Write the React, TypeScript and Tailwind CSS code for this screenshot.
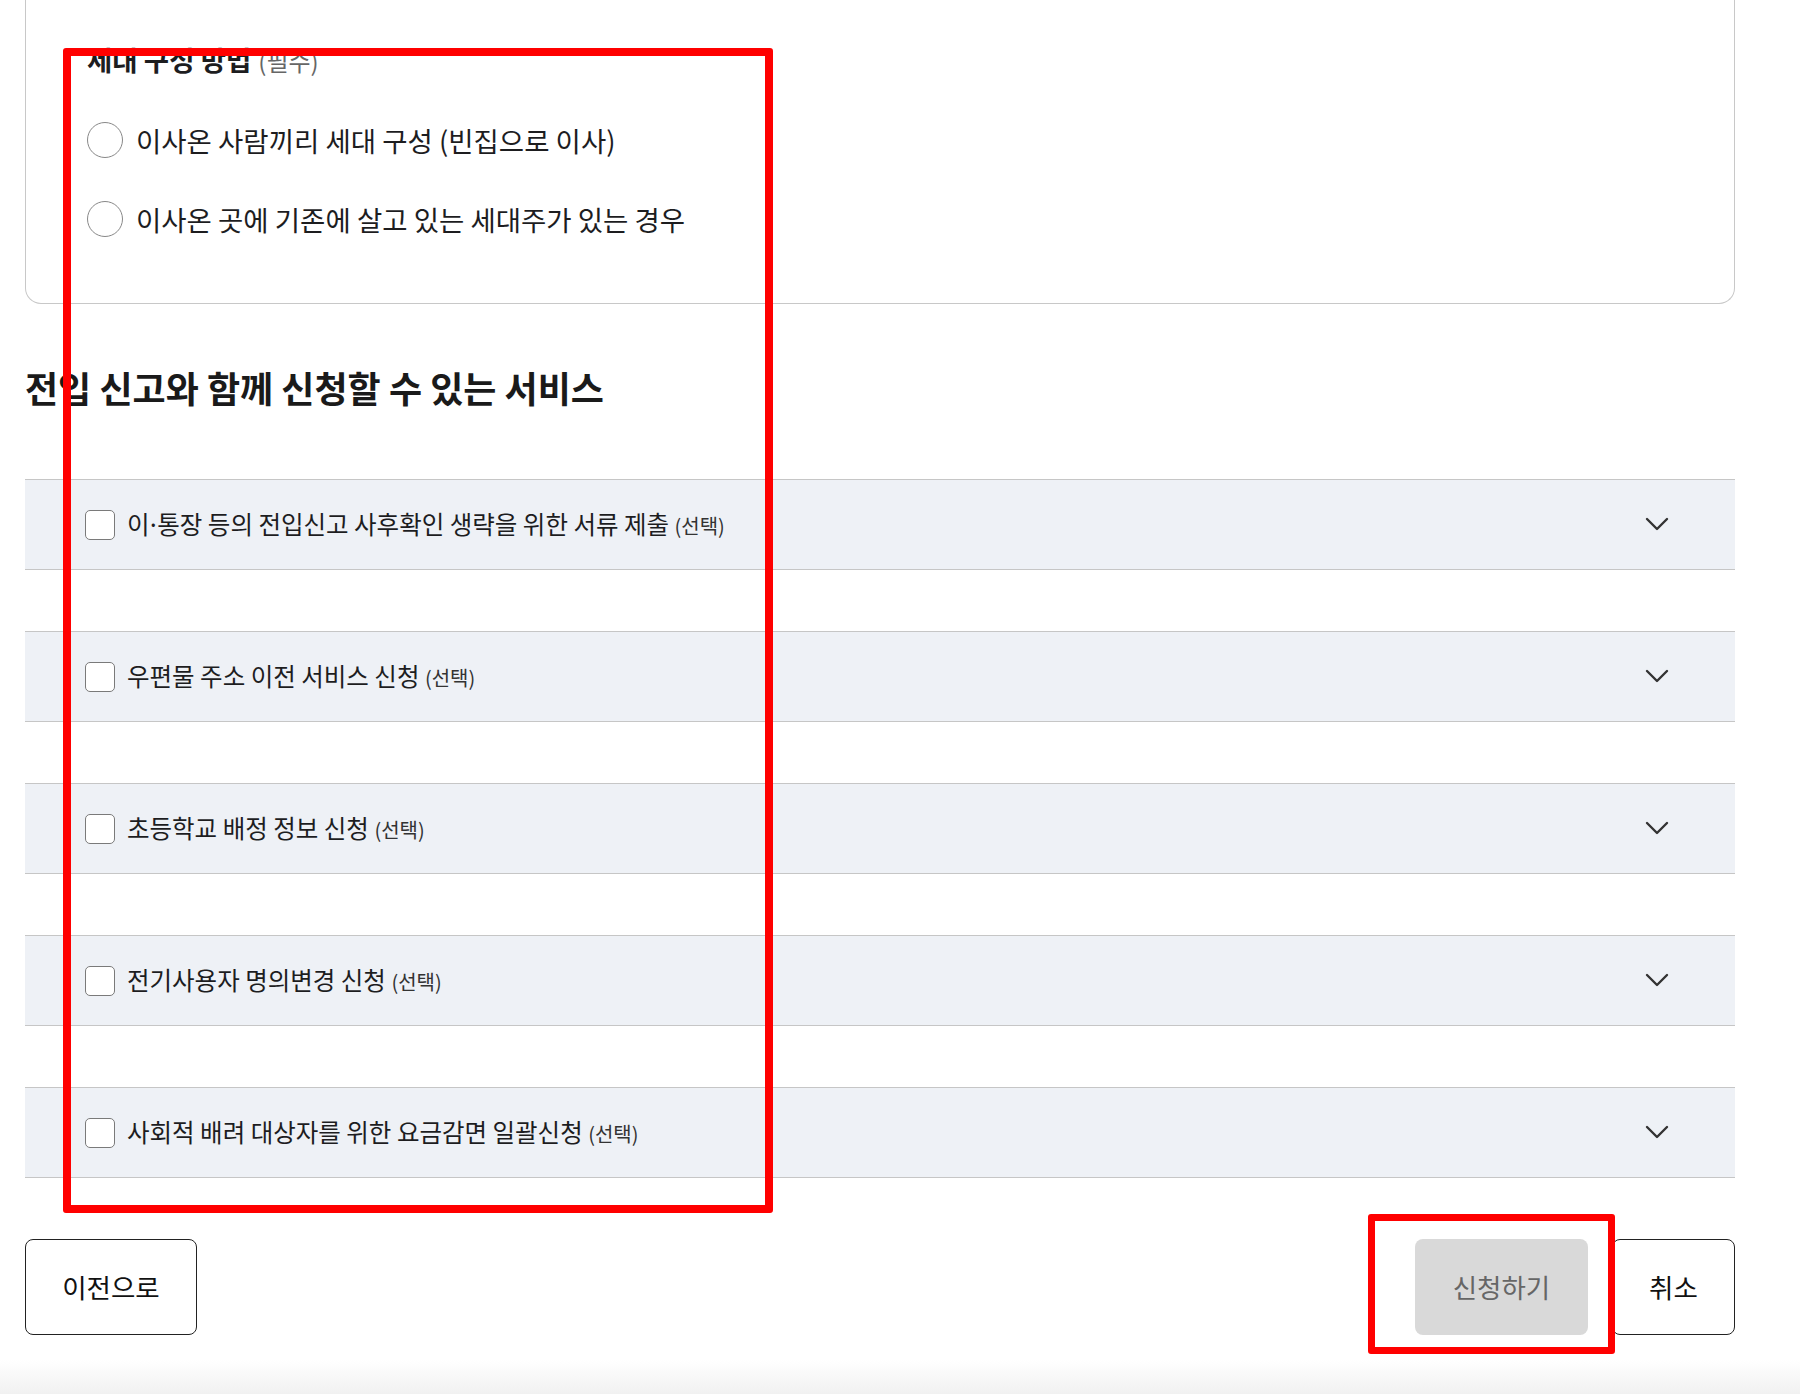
import React from "react";

const services: React.ReactNode[] = [
  <>
    이<span className="mx-[-3px]">·</span>통장 등의 전입신고 사후확인 생략을 위한 서류 제출
  </>,
  "우편물 주소 이전 서비스 신청",
  "초등학교 배정 정보 신청",
  "전기사용자 명의변경 신청",
  "사회적 배려 대상자를 위한 요금감면 일괄신청",
];

const Chevron: React.FC = () => (
  <svg width="24" height="15" viewBox="0 0 24 15" fill="none">
    <polyline points="2,2 12,12 22,2" stroke="#333" strokeWidth="2.4" strokeLinecap="round" strokeLinejoin="round" />
  </svg>
);

const App: React.FC = () => {
  return (
    <div
      className="relative min-h-[1394px] w-[1800px] bg-white text-[#1d1d1f]"
      style={{ fontFamily: '"Noto Sans CJK KR", "Noto Sans", sans-serif' }}
    >
      <div className="ml-[25px] w-[1710px]">
        {/* household card, top is scrolled out of view */}
        <div className="rounded-b-[16px] border-x border-b border-[#c8c8c8] pl-[61px] pt-[44px] pb-[66px]">
          <div className="flex items-baseline gap-[7px] leading-[30px]">
            <span className="text-[27.5px] font-bold">세대 구성 방법</span>
            <span className="text-[24px] text-[#666]">(필수)</span>
          </div>
          <div className="mt-[46px] flex flex-col gap-[43px]">
            <label className="flex items-center gap-[13px]">
              <span className="h-[36px] w-[36px] rounded-full border border-[#888] bg-white" />
              <span className="text-[27.5px] leading-[36px]">이사온 사람끼리 세대 구성 (빈집으로 이사)</span>
            </label>
            <label className="flex items-center gap-[13px]">
              <span className="h-[36px] w-[36px] rounded-full border border-[#888] bg-white" />
              <span className="text-[27.5px] leading-[36px]">이사온 곳에 기존에 살고 있는 세대주가 있는 경우</span>
            </label>
          </div>
        </div>

        <h2 className="mt-[63px] text-[36px] font-bold leading-[40px] text-[#1a1a1a]">
          전입 신고와 함께 신청할 수 있는 서비스
        </h2>

        <div className="mt-[72px] flex flex-col gap-[61px]">
          {services.map((s, i) => (
            <div
              key={i}
              className="flex h-[91px] items-center justify-between border-y border-[#c6c6c6] bg-[#eef1f6] pl-[60px] pr-[66px]"
            >
              <div className="flex items-center gap-[12px]">
                <span className="h-[30px] w-[30px] rounded-[5px] border border-[#7a7a7a] bg-white" />
                <span className="text-[24.5px] leading-[30px]">
                  {s} <span className="text-[20px] text-[#333]">(선택)</span>
                </span>
              </div>
              <Chevron />
            </div>
          ))}
        </div>

        <div className="mt-[61px] flex items-center justify-between">
          <button className="h-[96px] w-[172px] rounded-[8px] border border-[#222] bg-white text-[26.5px] text-[#111]">
            이전으로
          </button>
          <div className="flex items-center gap-[24px]">
            <button className="h-[96px] w-[173px] rounded-[8px] bg-[#d9d9d9] text-[26.5px] text-[#666]">
              신청하기
            </button>
            <button className="h-[96px] w-[123px] rounded-[8px] border border-[#222] bg-white text-[26.5px] text-[#111]">
              취소
            </button>
          </div>
        </div>
      </div>

      <div className="absolute bottom-0 left-0 h-[34px] w-full bg-gradient-to-b from-white to-[#f1f1f1]" />

      {/* annotation boxes */}
      <div className="pointer-events-none absolute left-[63px] top-[48px] h-[1165px] w-[710px] rounded-[3px] border-[8px] border-[#ff0000]" />
      <div className="pointer-events-none absolute left-[1368px] top-[1214px] h-[140px] w-[247px] rounded-[3px] border-[7px] border-[#ff0000]" />
    </div>
  );
};

export default App;
